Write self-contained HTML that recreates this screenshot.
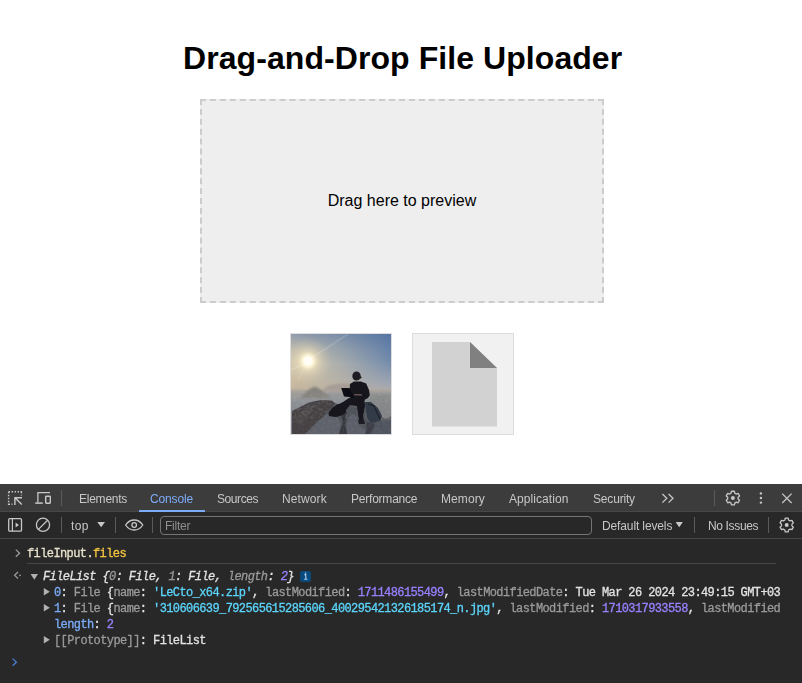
<!DOCTYPE html>
<html><head><meta charset="utf-8">
<style>
*{box-sizing:border-box;margin:0;padding:0}
html,body{width:802px;height:683px;overflow:hidden;background:#fff;font-family:"Liberation Sans",sans-serif;}
#page{position:absolute;left:0;top:0;width:802px;height:484px;background:#fff}
h1{position:absolute;left:183px;top:40px;white-space:nowrap;font-size:32px;font-weight:bold;line-height:37px;color:#000;letter-spacing:0.07px}
#drop{position:absolute;left:200px;top:99px;width:404px;height:204px;border:2px dashed #ccc;background:#eee;display:flex;align-items:center;justify-content:center;font-size:16px;color:#000}
.thumb{position:absolute;top:333px;width:102px;height:102px;border:1px solid #ddd;background:#f1f1f1;overflow:hidden}
.thumb svg{display:block}
#dt{position:absolute;left:0;top:484px;width:802px;height:199px;background:#282828;color:#e3e3e3;font-size:12px}
#tabs{position:absolute;left:0;top:0;width:802px;height:28px;background:#3c3c3c;border-bottom:1px solid #474747}
#tb{position:absolute;left:0;top:28px;width:802px;height:27px;background:#282828;border-bottom:1px solid #474747}
.tab{position:absolute;will-change:transform;top:8px;font-size:12px;line-height:15px;color:#c7c7c7;white-space:nowrap}
.sep{position:absolute;width:1px;background:#5a5a5a}
.ic{position:absolute}
.ln{font-family:"Liberation Mono",monospace;font-size:12px;letter-spacing:-0.6px;line-height:16px;white-space:pre;position:absolute;color:#e3e3e3;-webkit-text-stroke:0.3px}
.g{color:#9a9a9a}.c{color:#5cd5fb}.p{color:#9980ff}.b{color:#7cacf8}.y{color:#f5c542}
</style></head><body>
<div id="page">
<h1>Drag-and-Drop File Uploader</h1>
<div id="drop">Drag here to preview</div>
<div class="thumb" style="left:290px" id="photo"><!--PS--><svg width="100" height="100" viewBox="0 0 100 100"><defs>
<linearGradient id="sr" x1="0" y1="0" x2="0" y2="58" gradientUnits="userSpaceOnUse"><stop offset="0" stop-color="#5676a4"/><stop offset="0.45" stop-color="#718aac"/><stop offset="0.85" stop-color="#9da5b2"/><stop offset="1" stop-color="#b2aba8"/></linearGradient>
<linearGradient id="sl" x1="0" y1="0" x2="0" y2="58" gradientUnits="userSpaceOnUse"><stop offset="0" stop-color="#939dab"/><stop offset="0.25" stop-color="#bcb9ad"/><stop offset="0.5" stop-color="#d3c8ad"/><stop offset="0.85" stop-color="#cbbb9f"/><stop offset="1" stop-color="#c2b39e"/></linearGradient>
<linearGradient id="mg" x1="0" y1="0" x2="1" y2="0"><stop offset="0" stop-color="#fff"/><stop offset="0.45" stop-color="#fff" stop-opacity=".6"/><stop offset="1" stop-color="#fff" stop-opacity="0"/></linearGradient>
<mask id="mk"><rect width="100" height="100" fill="url(#mg)"/></mask>
<radialGradient id="gl" cx="17" cy="27" r="24" gradientUnits="userSpaceOnUse"><stop offset="0" stop-color="#fff8e0" stop-opacity="1"/><stop offset="0.3" stop-color="#f6e8c2" stop-opacity=".75"/><stop offset="0.65" stop-color="#e6d8b6" stop-opacity=".3"/><stop offset="1" stop-color="#d8ccb0" stop-opacity="0"/></radialGradient>
<linearGradient id="hz" x1="0" y1="56" x2="0" y2="100" gradientUnits="userSpaceOnUse"><stop offset="0" stop-color="#a6a09a"/><stop offset="0.1" stop-color="#96989a"/><stop offset="0.4" stop-color="#888c92"/><stop offset="1" stop-color="#7a7e86"/></linearGradient>
<filter id="b1" x="-20%" y="-20%" width="140%" height="140%"><feGaussianBlur stdDeviation="0.6"/></filter>
<filter id="b2" x="-50%" y="-50%" width="200%" height="200%"><feGaussianBlur stdDeviation="1.6"/></filter>
<filter id="b3" x="-20%" y="-20%" width="140%" height="140%"><feGaussianBlur stdDeviation="0.8"/></filter>
<filter id="nz" x="0" y="0" width="100%" height="100%"><feTurbulence type="fractalNoise" baseFrequency="0.35" numOctaves="2" seed="4" result="t"/><feColorMatrix type="matrix" values="0 0 0 0 1  0 0 0 0 1  0 0 0 0 1  1.6 0 0 0 -0.75"/><feComposite in2="SourceGraphic" operator="in"/></filter>
<filter id="nd" x="0" y="0" width="100%" height="100%"><feTurbulence type="fractalNoise" baseFrequency="0.3" numOctaves="2" seed="9" result="t"/><feColorMatrix type="matrix" values="0 0 0 0 0.1  0 0 0 0 0.1  0 0 0 0 0.12  0 1.8 0 0 -0.8"/><feComposite in2="SourceGraphic" operator="in"/></filter>
</defs>
<rect width="100" height="58" fill="url(#sr)"/>
<rect width="100" height="58" fill="url(#sl)" mask="url(#mk)"/>
<rect width="100" height="58" fill="url(#gl)"/>
<g stroke="#fff" stroke-width="1.3" filter="url(#b1)"><path d="M19 25L57 0" stroke-opacity=".13" stroke-width="2"/><path d="M15 29L0 36" stroke-opacity=".2"/><path d="M16 30L7 46" stroke-opacity=".12"/></g>
<circle cx="17" cy="27" r="7" fill="#fff8dc" filter="url(#b2)"/>
<circle cx="17" cy="27" r="4.6" fill="#fffef6" filter="url(#b1)"/>
<rect y="56" width="100" height="44" fill="url(#hz)"/>
<g filter="url(#b3)">
<path d="M30 58L35 53L40 51L46 50L52 49.500L60 49.500L62 58Z" fill="#a59d96"/>
<path d="M0 55L10 55L16 56L100 55.500L100 57L0 59Z" fill="#b0a69c" opacity=".7"/>
<path d="M9 64L15 58L20 54L24 52.500L29 55L35 60L40 64Z" fill="#86847f"/>
<path d="M0 60H10V64H0Z" fill="#a09c96" opacity=".7"/>
</g>
<g filter="url(#b1)">
<path d="M1 100V78L2 76.500L7 74.300L12 71.500L18 68.700L25 67L31 66.200L41 66.800L46 70L50 72L54 69L64 68L74 68L80 70L86 74L91 83L95 85L100 82V100Z" fill="#505359"/>
<path d="M1 100V78L2 76.500L7 74.300L12 71.500L18 68.700L25 67L31 66.200L41 66.800L44 70L36 78L26 90L18 100Z" fill="#444142"/>
<path d="M4 84L14 74L24 70L20 78L8 92Z" fill="#55504e" opacity=".5"/>
<path d="M14 100L26 88L36 80L46 82L50 90L48 100Z" fill="#62656e" opacity=".9"/>
<path d="M55 100L56 88L60 80L66 82L68 92L76 96L78 100Z" fill="#5e626c" opacity=".9"/>
<path d="M48 74L52 72L56 78L54 90L56 100L48 100L52 88Z" fill="#35363e"/>
<path d="M80 100L84 92L92 86L100 83V100Z" fill="#4f555f"/>
<path d="M76 88L84 90L80 100L74 100Z" fill="#3c3e48"/>
</g>
<path d="M1 100V78L2 76.500L7 74.300L12 71.500L18 68.700L25 67L31 66.200L41 66.800L46 70L50 72L54 69L64 68L74 68L80 70L86 74L91 83L95 85L100 82V100Z" fill="#fff" filter="url(#nz)" opacity=".1"/>
<path d="M1 100V78L2 76.500L7 74.300L12 71.500L18 68.700L25 67L31 66.200L41 66.800L46 70L50 72L54 69L64 68L74 68L80 70L86 74L91 83L95 85L100 82V100Z" fill="#000" filter="url(#nd)" opacity=".6"/>
<rect x="76" y="60" width="24" height="26" fill="#80807c" opacity=".45" filter="url(#b3)"/><rect y="60" width="100" height="24" fill="#fff" filter="url(#nz)" opacity=".14"/>
<g filter="url(#b1)">
<path d="M74 68L80 68L87 74L91 82L89 87L80 89L76 84Z" fill="#313b47"/>
<path d="M77 70L83 72L89 85" stroke="#1c2028" stroke-width="1.2" fill="none"/>
</g>
<g fill="#14141c" filter="url(#b1)">
<ellipse cx="65.5" cy="42" rx="4.2" ry="4.6" fill="#1e1c22"/>
<path d="M68 41L71 43.500L69 45Z" fill="#2a2426"/>
<path d="M59 50L63 47.500L70 47.500L75.200 49.500L78 56L78.800 61L77 64L74 65.500L73 68L60 68L58.500 60Z"/>
<path d="M50.200 54L58.500 54L63 63.500L53 62.500Z" fill="#0e0e16"/>
<path d="M58 64L73 65L74 72L72 82L73 88L69 89L67 80L66 72L59 71L52 80L46 83L40 81L46 75L52 68Z"/>
<path d="M37.500 79L41 74L46 70.500L52 69L54 74L52 81L44 83L38 82Z" fill="#17171f"/>
<path d="M45 72L52 68L56 72L54 80L48 80Z" fill="#16161e"/>
<path d="M67 86L73 86L74 90L68 90Z" fill="#1a1a22"/>
</g>
<path d="M63 60.5L71 61" stroke="#7a6460" stroke-width="1.3" opacity=".8" filter="url(#b1)"/>
</svg><!--PE--></div>
<div class="thumb" style="left:412px" id="file"><svg width="100" height="100" viewBox="0 0 100 100"><path d="M19 8H57L84 34V92.500H19Z" fill="#d2d2d2"/><path d="M57 8L84 34H57Z" fill="#808080"/></svg></div>
</div>
<div id="dt">
<div id="tabs">
<span class="tab" style="left:79px;letter-spacing:-0.24px">Elements</span>
<span class="tab" style="left:150px;letter-spacing:-0.13px;color:#7cacf8">Console</span>
<span class="tab" style="left:216.5px;letter-spacing:-0.43px">Sources</span>
<span class="tab" style="left:281.5px;letter-spacing:0.11px">Network</span>
<span class="tab" style="left:350.5px;letter-spacing:-0.22px">Performance</span>
<span class="tab" style="left:440.5px;letter-spacing:0.08px">Memory</span>
<span class="tab" style="left:508.5px;letter-spacing:0.06px">Application</span>
<span class="tab" style="left:592.5px;letter-spacing:-0.18px">Security</span>
<div style="position:absolute;left:139px;top:26px;width:66px;height:2px;background:#7cacf8"></div>
<div class="sep" style="left:61px;top:6px;height:16px"></div>
<div class="sep" style="left:714px;top:6px;height:16px"></div>
</div>
<div id="tb">
<div class="sep" style="left:61px;top:5px;height:16px"></div>
<div class="sep" style="left:115px;top:5px;height:16px"></div>
<div class="sep" style="left:152px;top:5px;height:16px"></div>
<div class="sep" style="left:694px;top:5px;height:16px"></div>
<div class="sep" style="left:768px;top:5px;height:16px"></div>
<span class="tab" style="left:71px;top:7px;letter-spacing:.37px">top</span>
<div style="position:absolute;left:160px;top:4px;width:432px;height:19px;border:1px solid #757575;border-radius:4px"></div>
<span class="tab" style="left:164.5px;top:7px;color:#8f8f8f;letter-spacing:-.24px">Filter</span>
<span class="tab" style="left:601.5px;top:7px;letter-spacing:-.125px">Default levels</span>
<span class="tab" style="left:707.5px;top:7px;letter-spacing:-.35px">No Issues</span>
</div>
<svg id="icons" width="802" height="56" viewBox="0 484 802 56" style="position:absolute;left:0;top:0" fill="none" stroke="#c7c7c7" stroke-width="1.3">
<!-- inspect -->
<path d="M8.6 491.8H22" stroke-dasharray="1.4 1.6" stroke-width="1.4"/>
<path d="M8.6 491.8V505" stroke-dasharray="1.4 1.6" stroke-width="1.4"/>
<path d="M21.4 491.8V495.5" stroke-dasharray="1.4 1.6" stroke-width="1.4"/>
<path d="M8.6 504.3H12.5" stroke-dasharray="1.4 1.6" stroke-width="1.4"/>
<path d="M22 497.7H14.9V505M15.2 498L21.8 504.6" stroke-width="1.4"/>
<!-- device -->
<path d="M50 492.6H37.9V502.4" stroke-width="1.3"/>
<path d="M35.2 503.1H42.8" stroke-width="1.5"/>
<rect x="45.7" y="496.2" width="4.6" height="7" rx=".6" stroke-width="1.4"/>
<!-- sidebar -->
<rect x="8.7" y="518.6" width="12.8" height="12.6" rx="1.2" stroke-width="1.3"/>
<path d="M12.4 518.6V531.2" stroke-width="1.2"/>
<path d="M15.6 522.4L19 524.9L15.6 527.4Z" fill="#c7c7c7" stroke="none"/>
<!-- clear -->
<circle cx="43" cy="524.8" r="6.6" stroke-width="1.3"/>
<path d="M38.4 529.4L47.6 520.2" stroke-width="1.3"/>
<!-- dropdown arrows -->
<path d="M97.3 522L105 522L101.15 527.2Z" fill="#c7c7c7" stroke="none"/>
<path d="M675.6 522L682.8 522L679.2 527.2Z" fill="#c7c7c7" stroke="none"/>
<!-- eye -->
<path d="M125.6 525C128 521.4 131 520 134.2 520C137.400 520 140.400 521.4 142.800 525C140.400 528.600 137.400 530 134.200 530C131 530 128 528.600 125.600 525Z" stroke-width="1.3"/>
<circle cx="134.200" cy="525" r="2.300" stroke-width="1.300"/>
<!-- chevrons -->
<path d="M662.400 494L666.800 498.300L662.400 502.600M668.600 494L673 498.300L668.600 502.600" stroke-width="1.300"/>
<!-- gears -->
<g transform="translate(732.900 498.100)"><path d="M-1.85 -4.97L-1.46 -6.85L1.46 -6.85L1.85 -4.97L3.38 -4.08L5.20 -4.68L6.66 -2.16L5.23 -0.88L5.23 0.88L6.66 2.16L5.20 4.68L3.38 4.08L1.85 4.97L1.46 6.85L-1.46 6.85L-1.85 4.97L-3.38 4.08L-5.20 4.68L-6.66 2.16L-5.23 0.88L-5.23 -0.88L-6.66 -2.16L-5.20 -4.68L-3.38 -4.08Z" stroke-width="1.300" stroke-linejoin="round"/><circle r="2" fill="#c7c7c7" stroke="none"/></g>
<g transform="translate(786.700 525)"><path d="M-1.85 -4.97L-1.46 -6.85L1.46 -6.85L1.85 -4.97L3.38 -4.08L5.20 -4.68L6.66 -2.16L5.23 -0.88L5.23 0.88L6.66 2.16L5.20 4.68L3.38 4.08L1.85 4.97L1.46 6.85L-1.46 6.85L-1.85 4.97L-3.38 4.08L-5.20 4.68L-6.66 2.16L-5.23 0.88L-5.23 -0.88L-6.66 -2.16L-5.20 -4.68L-3.38 -4.08Z" stroke-width="1.300" stroke-linejoin="round"/><circle r="2" fill="#c7c7c7" stroke="none"/></g>
<!-- dots -->
<g fill="#c7c7c7" stroke="none"><circle cx="760.900" cy="493.400" r="1.200"/><circle cx="760.900" cy="498" r="1.200"/><circle cx="760.900" cy="502.600" r="1.200"/></g>
<!-- close -->
<path d="M782.200 493.600L791.600 503M791.600 493.600L782.200 503" stroke-width="1.300"/>
</svg>
<div id="con">
<svg width="802" height="143" viewBox="0 540 802 143" style="position:absolute;left:0;top:56px" fill="none">
<path d="M15.800 549.600L19.600 553.200L15.800 556.800" stroke="#9a9a9a" stroke-width="1.300"/>
<path d="M18 572L14.600 575.300L18 578.600" stroke="#9a9a9a" stroke-width="1.300"/><circle cx="20" cy="575.300" r=".9" fill="#9a9a9a"/>
<path d="M30.600 574L38 574L34.300 579.800Z" fill="#b0b0b0"/>
<path d="M43.800 588L49.800 591.800L43.800 595.600Z" fill="#b0b0b0"/>
<path d="M43.800 604L49.800 607.800L43.800 611.600Z" fill="#b0b0b0"/>
<path d="M43.800 636L49.800 639.800L43.800 643.600Z" fill="#b0b0b0"/>
<rect x="300" y="571" width="11" height="11" rx="2.200" fill="#0b4a7c"/>
<path d="M304.300 574.600H305.800V579.200M304.200 579.300H307.400" stroke="#a8d1f5" stroke-width="1.100"/><rect x="304.900" y="572.500" width="1.300" height="1.200" fill="#a8d1f5"/>
<path d="M12.600 658.600L16.400 662.200L12.600 665.800" stroke="#4a7fd6" stroke-width="1.300"/>
</svg>
<div class="ln" style="left:27px;top:62px"><span style="color:#e8e2cc">fileInput.</span><span class="y">files</span></div>
<div style="position:absolute;left:27px;top:79px;width:749px;height:1px;background:#474747"></div>
<div class="ln" style="left:43px;top:85px;font-style:italic">FileList {<span class="g">0</span>: File, <span class="g">1</span>: File, <span class="g">length</span>: <span class="p">2</span>}</div>
<div class="ln" style="left:54px;top:101px"><span class="b">0</span>: <span class="g">File </span>{<span class="g">name</span>: <span class="c">'LeCto_x64.zip'</span>, <span class="g">lastModified</span>: <span class="p">1711486155499</span>, <span class="g">lastModifiedDate</span>: Tue Mar 26 2024 23:49:15 GMT+03</div>
<div class="ln" style="left:54px;top:117px"><span class="b">1</span>: <span class="g">File </span>{<span class="g">name</span>: <span class="c">'310606639_792565615285606_400295421326185174_n.jpg'</span>, <span class="g">lastModified</span>: <span class="p">1710317933558</span>, <span class="g">lastModified</span></div>
<div class="ln" style="left:54px;top:133px"><span class="b">length</span>: <span class="p">2</span></div>
<div class="ln" style="left:54px;top:149px"><span class="g">[[Prototype]]</span>: FileList</div>
</div>
</div>
</body></html>
